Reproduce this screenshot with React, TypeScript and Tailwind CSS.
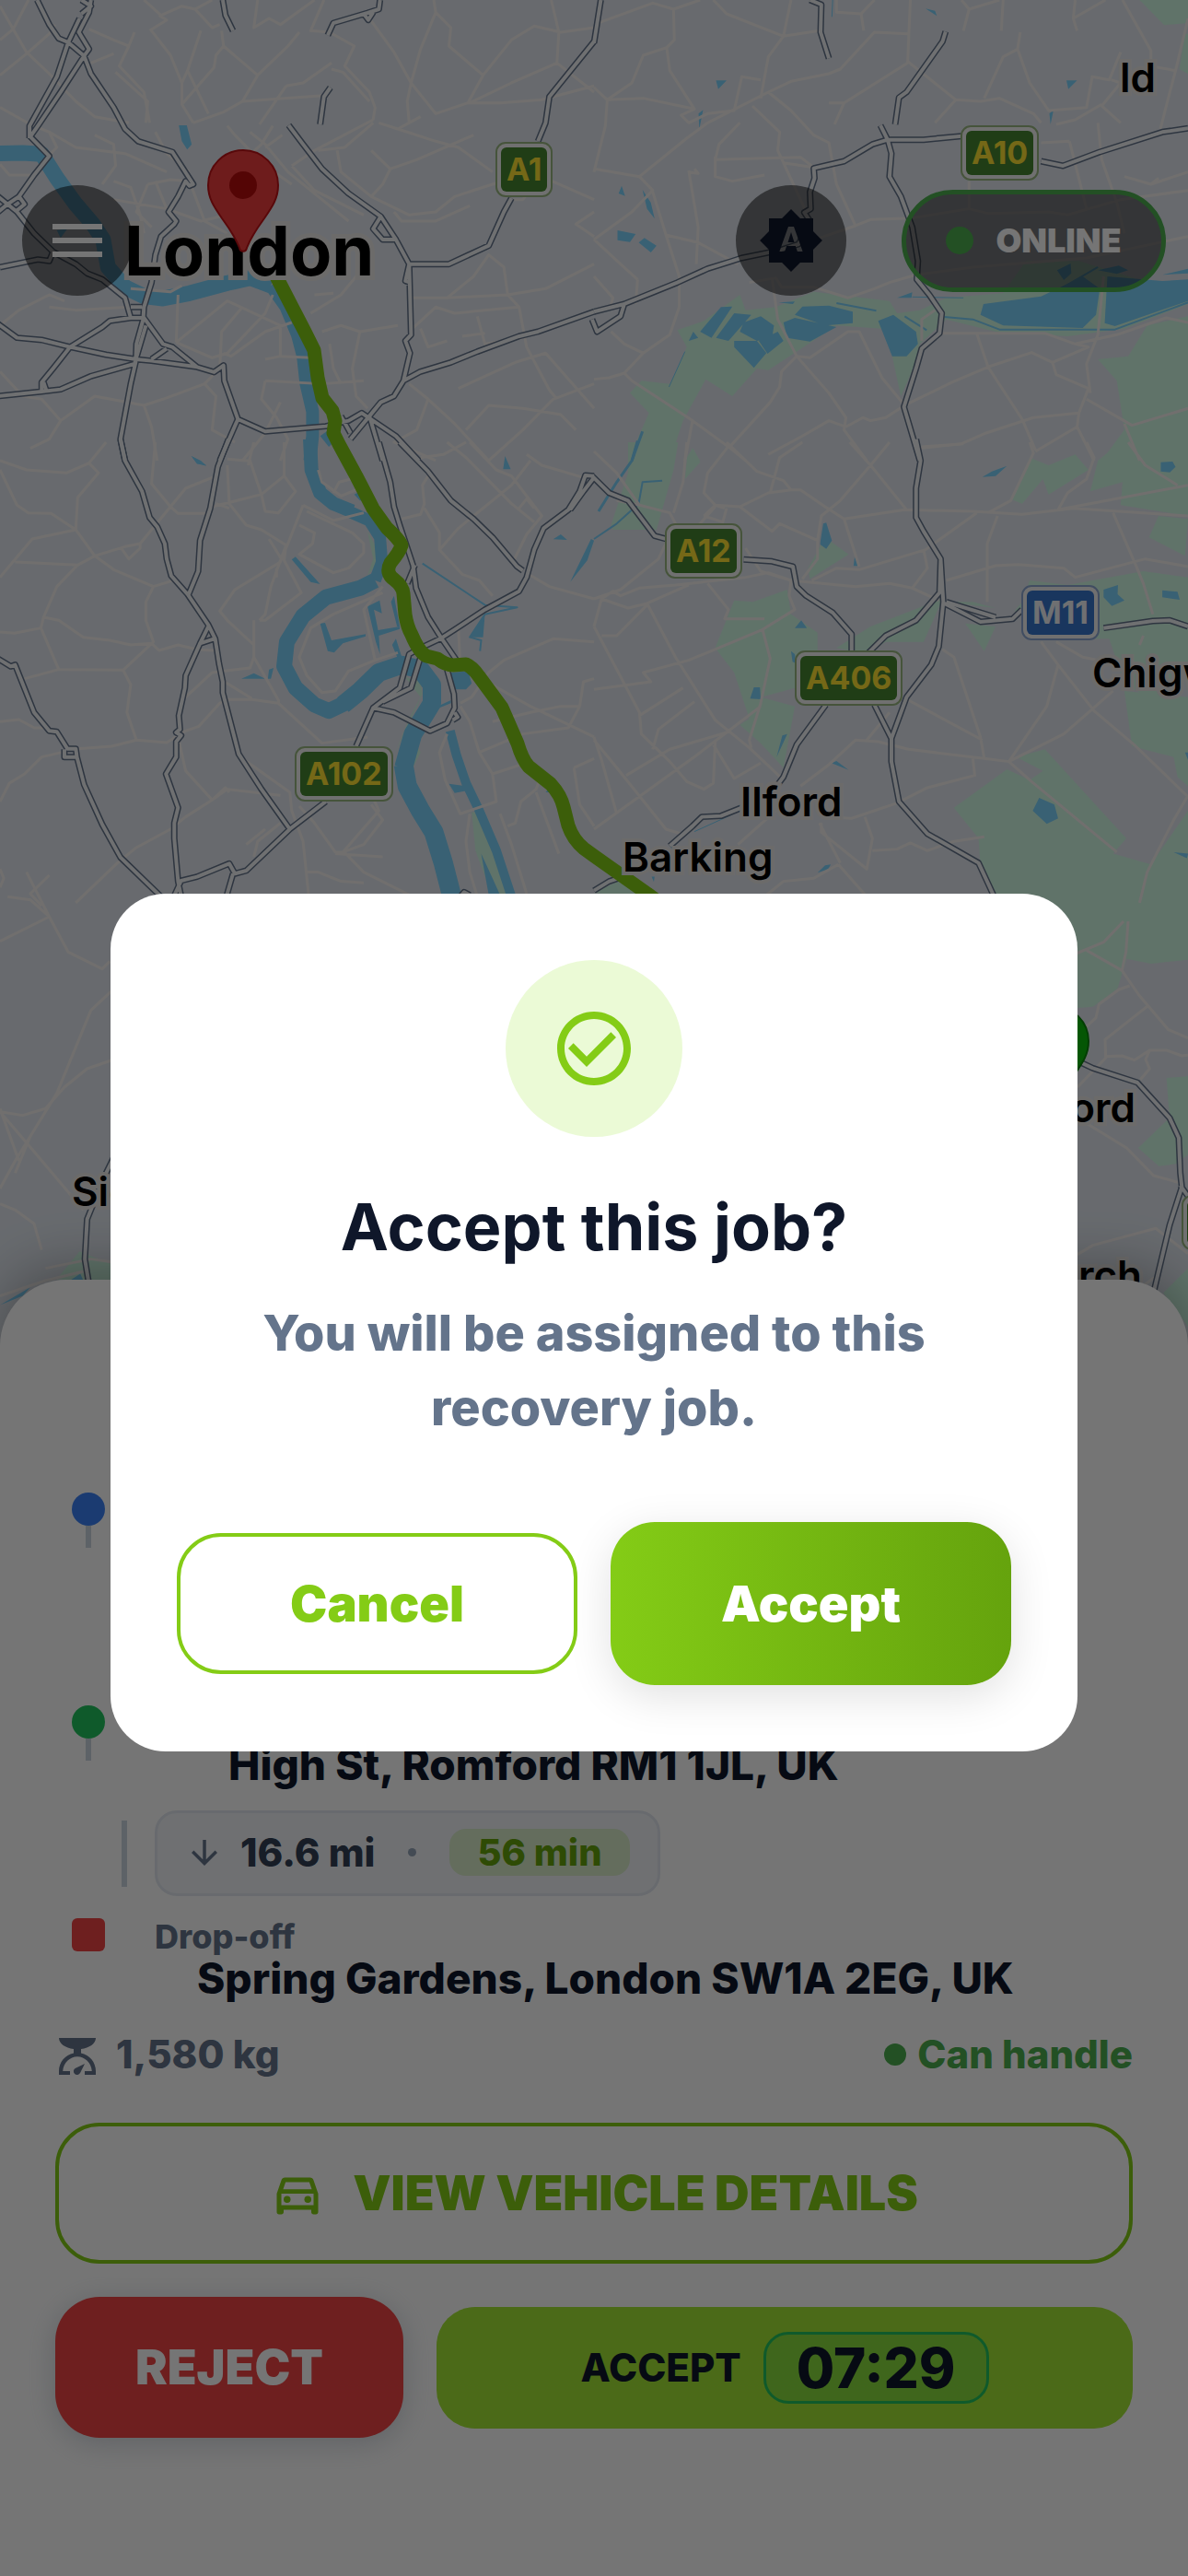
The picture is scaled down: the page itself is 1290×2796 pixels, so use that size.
import type { ReactNode } from "react";
import {
  MdArrowDownward,
  MdBrightnessAuto,
  MdCheckCircleOutline,
  MdMenu,
  MdOutlineDirectionsCar,
} from "react-icons/md";

type Tile = {
  at: string;
  green?: string[];
  water?: string[];
  river?: [string, number][];
  minor: string[];
  major: string[];
};

const tiles: Tile[] = [
  {
    at: "translate(0 0) scale(0.4114 0.3333)",
    water: ["M472 408L493 408L506 470L494 487L480 460Z", "M845 1420L868 1400L890 1430L868 1455Z", "M505 1485L545 1515L520 1510Z", "M150 750L178 745L160 775Z"],
    river: [
      ["M-10 500L60 498L110 502L150 580L200 665L245 730L272 780L285 870L330 935L380 965L430 972L500 955L600 922L660 905L715 930", 17],
      ["M715 930L755 1000L785 1090L800 1160L808 1250L825 1340L825 1420L818 1500", 14],
    ],
    minor: [
      "M0 130L35 95L75 0", "M0 20L70 170L130 240L200 330L250 380L340 400", "M0 245L75 170L130 110L145 80", "M0 350L80 405L130 430L200 480L330 500L440 560",
      "M235 95L300 130L340 150L315 215L380 300L395 400", "M240 205L300 175", "M305 235L390 330L385 400", "M355 105L340 150", "M380 0L425 50L480 20L515 30L560 90L580 80", "M515 30L560 0",
      "M680 0L670 90L710 60L740 80L830 0", "M395 100L440 65L420 50", "M400 100L450 180L480 270L480 340L510 400", "M530 100L495 230L480 270M495 230L550 370", "M585 100L590 150L680 245L640 330L590 365L510 400",
      "M590 150L570 180L565 220L480 340", "M680 245L760 150L790 105", "M640 330L870 310M755 280L800 270L875 205M755 280L685 405", "M855 0L820 100L870 105L935 150L910 215L975 300L990 350L985 390",
      "M875 225L905 235L975 330", "M975 60L1040 170L1085 270L1075 330L1080 400M1145 0L1150 40L1190 90L1185 150L1275 245L1235 335L1150 370L1085 270", "M1150 40L1110 160L1085 270", "M1235 335L1320 335L1430 325L1568 280M1275 245L1350 130L1410 85L1480 105L1568 90M1455 0L1475 105L1470 205L1568 300M1470 205L1350 270L1240 335",
      "M1000 400L1050 420L1150 460L1210 480L1300 560M1050 420L1110 380M985 390L830 490L770 540M840 490L910 480L985 400M600 410L620 440L700 540L770 600M660 430L700 470L760 560L840 640L920 720M770 540L830 620L960 700M745 440L700 480M720 410L690 470L620 550",
      "M1030 550L1100 520L1250 440M1030 550L1010 600L980 640L1080 700L1150 690L1200 640L1300 600L1400 560M980 490L1030 550M980 640L900 560L890 490M1040 690L1060 720L1150 720L1240 670M1420 570L1568 650M1568 690L1520 730L1568 770M1340 650L1380 650L1420 590",
      "M250 440L300 470L305 540L270 600M410 430L440 500L500 560M130 430L150 480L110 530M0 535L25 570L80 570M300 590L345 610L370 700L380 760M390 600L450 585L500 590M390 600L360 690L400 740M410 590L440 680M300 650L440 680L530 720L600 700M500 590L540 720L600 760",
      "M345 940L450 950L480 930M130 1000L200 1010L340 1000M0 1060L50 1010L130 960L170 980M470 960L465 1115M465 1115L600 980L740 1060L740 1160M465 1115L560 1165L600 1150L700 1020L720 960M580 1200L585 1080L640 1000M590 1150L610 1160L700 1080L770 1050M700 1170L740 1160L820 1165M700 1240L850 1250L960 1240M700 1240L690 1300L730 1360L760 1430L740 1500",
      "M830 960L880 955M820 1020L900 960L960 870M850 1080L900 1060L950 1080L1050 1060M870 1120L880 1200L900 1250M950 1080L930 1200L940 1290L970 1330M1080 970L1180 970L1250 900L1290 830L1330 870L1340 960L1370 1000L1390 1130L1450 1270L1470 1300M1180 970L1340 960L1440 940L1520 890L1568 860M1260 1030L1280 1120L1380 1100M1080 1080L1150 1000L1200 1020L1370 1000M1110 1070L1130 1130L1180 1110M1220 1095L1280 1085",
      "M1080 1250L1130 1300L1200 1380L1290 1500M1130 1300L1100 1400L1040 1440L1150 1500M1210 1265L1360 1180L1440 1150L1568 1330M1230 1400L1290 1320L1380 1330L1480 1350L1520 1400M1290 1500L1380 1400L1460 1300L1568 1250",
      "M0 1210L60 1290L110 1300L160 1370L250 1290L380 1320L430 1300L540 1250L580 1200M160 1370L130 1430L80 1460M380 1320L400 1390L415 1500M540 1250L570 1290L560 1400L620 1440M640 1500L700 1410L740 1310",
    ],
    major: [
      "M98 0L130 80L155 125L180 138L222 182L240 240L300 350L330 420L365 460L455 495L510 600L500 605L490 590L470 640L445 690L465 720L460 730L425 770L410 830L400 920L380 1000L378 1040L360 1120L358 1180L345 1250L330 1350L318 1430L330 1500",
      "M240 0L235 40L208 105L235 160L222 182L160 300L100 410L80 445L130 508L90 570L50 640L20 665L-5 690", "M215 0L240 20L215 45M210 60L180 138L150 250L78 410L78 450",
      "M-5 640L45 690L90 760L140 820L130 850L100 845L0 870", "M50 640L65 665L40 690", "M140 820L200 860L230 890L270 910L330 970L345 1035L290 1045L270 1065L185 1130L140 1200L110 1245L110 1270",
      "M345 1000L375 1000M345 1035L380 1035L430 1120L455 1130L520 1195L565 1212L590 1190L592 1240L628 1365L580 1500", "M-5 1055L45 1100L110 1107L185 1130L280 1155L360 1170L400 1175L520 1195M400 1170L440 1135",
      "M-5 1290L110 1275L160 1268L240 1225L355 1185L385 1060M110 1275L122 1270L115 1245",
      "M588 0L595 50L615 100", "M1003 0L1000 30L970 42L880 75L865 115M960 45L972 65L985 40", "M872 285L855 315L845 405", "M762 408L800 470L850 550L920 630L1005 705L1045 780L1010 780L985 745L1005 705",
      "M1045 780L1080 860L1085 1090L1070 1110L1082 1150L1065 1240L1040 1290L1005 1310L975 1355L925 1430M1080 860L1070 915L1082 920M1080 860L1185 860L1290 800L1330 690L1350 645M1420 460L1440 400L1450 315L1568 135",
      "M1065 1240L1110 1210L1190 1180L1260 1145L1370 1095L1420 1080L1568 1015", "M628 1365L700 1405L860 1388L920 1370L955 1345L1045 1420L1105 1500M975 1355L1010 1500M900 1355L925 1410",
    ],
  },
  {
    at: "translate(645 0) scale(0.4114 0.3333)",
    green: [
      "M1440 0L1568 0L1568 75L1505 82Z", "M1560 110L1568 110L1568 240L1545 225Z",
      "M220 1075L290 1045L385 960L400 1010L480 1000L580 950L780 980L800 1020L860 1010L930 970L1080 955L1140 850L1280 850L1568 960L1568 990L1400 1070L1250 1095L1060 1080L930 1040L860 1120L850 1180L810 1290L780 1120L760 1070L640 1060L460 1205L430 1200L365 1290L295 1235L235 1370L200 1500L90 1500L145 1345L95 1280L125 1240L200 1250L245 1130Z",
      "M1568 1030L1460 1060L1410 1160L1330 1170L1380 1240L1400 1400L1340 1500L1568 1500Z", "M260 1460L280 1500L240 1500Z",
    ],
    water: [
      "M335 1000L365 998L310 1100L280 1080Z", "M370 1020L415 1025L355 1110L322 1100Z", "M395 1050L440 1030L475 1060L470 1100L430 1110L385 1080Z", "M370 1110L430 1110L455 1150L422 1198L370 1130Z", "M500 1050L530 1035L640 1065L570 1112L510 1100Z", "M435 1110L485 1080L500 1110L458 1152Z",
      "M530 1025L550 998L620 995L683 1015L683 1052L610 1060Z", "M262 1080L275 1100L250 1110Z", "M750 1045L790 1025L850 1080L855 1120L825 1160L787 1160Z", "M1028 990L1180 965L1290 900L1335 940L1325 1025L1290 1068L1080 1060L1020 1025Z",
      "M1355 900L1500 915L1568 910L1568 980L1375 1062L1348 1052Z", "M1222 880L1258 858L1260 890L1240 912Z", "M1500 895L1568 875L1568 890Z", "M1330 880L1385 865L1410 880L1380 892Z", "M322 262L350 262L328 290Z", "M1247 262L1275 262L1252 290Z", "M875 28L900 35L905 52Z",
      "M62 750L110 762L95 788L62 782Z", "M118 790L133 775L165 800L150 822Z", "M65 630L73 605L82 638Z", "M128 618L150 660L160 712L140 680Z", "M800 970L840 952L838 970Z", "M487 985L530 982L525 990Z", "M276 370L288 358L278 420Z", "M1202 370L1213 358L1205 405Z",
    ],
    river: [["M640 987L745 1012", 2], ["M925 1032L1000 1040L1070 1073L1375 1073L1568 985", 2], ["M820 1030L878 1075", 2], ["M840 967L975 970", 1], ["M240 1145L198 1260", 1], ["M128 1405L100 1500", 3], ["M1205 960L1330 870", 2], ["M630 0L628 55", 1]],
    minor: [
      "M0 80L155 10L210 30L280 0M210 30L212 130L192 155L200 230L265 355M192 155L130 180L100 270L35 325M0 285L35 325L130 320L265 355L230 375L250 400L300 370L370 360L390 250L440 260M0 560L30 410L35 325M315 0L350 45L500 118L595 100M520 0L500 118L460 185L440 320M300 400L460 300L520 265L620 240M460 300L520 360L580 440L620 465L640 600L690 735L560 790",
      "M418 345L490 430L485 490L500 530L580 545M320 520L330 470L385 400M450 515L545 512L580 545M0 550L120 575L245 450L300 400M320 520L450 515M320 510L320 575L365 590L450 570M250 555L275 740L270 860M120 575L155 620L100 690L0 780M155 625L190 765L275 790L380 860M190 765L225 900L225 1000M250 560L275 565L265 550M500 530L560 690",
      "M640 0L640 40L705 45L740 0M705 45L712 100M835 0L828 200L955 325L1020 330L1070 320L1160 370L1180 400M830 110L740 105L650 225L620 240M620 335L660 335L828 205M660 335L635 405M955 325L900 400M970 0L990 30L975 100M990 30L1070 0M1080 0L1075 100M1270 0L1265 60L1275 100M1265 60L1350 0M1125 105L1118 160L1080 185L1030 320M1118 160L1150 270L1200 360L1300 350L1315 250L1360 260L1390 170M1340 340L1270 390L1220 405M1340 345L1390 400M1340 345L1390 270L1365 260M1395 0L1470 165L1470 215L1535 230L1568 60M1535 230L1520 300L1495 420",
      "M0 1235L40 1230L80 1215L130 1150L200 1090L225 1000M80 1215L100 1240L260 1370L360 1460L400 1500M260 1370L240 1500M45 1080L80 1120L130 1150M0 900L50 970L45 990M115 910L70 860L0 780M115 910L110 990M470 905L485 1040L535 1160L620 1280L665 1360L660 1400L720 1500M535 1160L570 1165L670 1080L700 1080L760 1230L820 1320M535 1160L495 1210L490 1260L465 1310L355 1460M665 1390L710 1360L730 1370L770 1360L820 1320M665 1390L620 1370L550 1420L460 1480",
      "M410 920L480 905L495 935L580 935L670 970L740 940L780 920L850 895M850 895L1000 870L1300 840L1568 770M690 735L730 715L840 710L990 680L1040 695L1200 690L1250 700L1390 650L1568 620M990 590L990 680M1255 460L1300 680M1330 400L1340 520L1380 660L1400 760M1180 465L1255 460M1470 600L1568 560M1400 575L1470 600L1490 580",
      "M820 1320L945 1245L1040 1195L1155 1148L1210 1180L1305 1130L1270 1120L1190 1085L910 1085M1010 1085L1040 1195L1130 1365L1165 1465M1210 1180L1220 1220L1305 1265L1280 1345L1160 1360L1035 1410L970 1445L860 1460M1280 1345L1275 1390L1165 1470M1270 1120L1380 1090L1510 1035L1568 1050M1345 900L1330 1090L1300 1185L1310 1280M1300 1300L1420 1385L1568 1330M1275 1390L1320 1500M1400 1380L1440 1500M865 1110L865 1040L900 1010",
    ],
    major: [
      "M18 0L0 140", "M570 0L600 15L598 105L620 190", "M928 103L920 135L825 300L805 318L795 405", "M756 408L775 455L870 455L970 443", "M775 455L735 470L660 525L580 548L582 580L570 625L572 680L555 692L570 720L540 795L490 815L390 840L360 852L300 875L220 920L80 990L0 1015", "M80 990L70 1030L8 1080L-5 1040",
      "M775 455L785 500L780 575L810 640L840 740L855 850L852 910L885 960L918 1020L912 1085L865 1135L850 1200L818 1325L860 1500", "M1180 525L1238 540L1335 495L1500 430L1568 418",
    ],
  },
  {
    at: "translate(0 480) scale(0.4114 0.3333)",
    green: ["M1070 765L1110 780L1115 820L1085 900L1040 1020L1080 900L1110 830Z", "M970 290L992 340L992 400L970 435L985 380Z", "M1098 980L1110 1010L1090 1060Z", "M1245 1205L1275 1200L1340 1480L1300 1480L1255 1330Z"],
    water: [
      "M770 382L780 373L845 462L820 455Z", "M845 590L858 588L875 645L965 625L965 632L905 655L882 685L865 680Z", "M970 535L1002 515L1008 557L987 545L998 612L1055 600L1055 608L1000 630L1003 690L992 650Z", "M1032 520L1040 500L1055 600L1048 600Z", "M1035 660L1045 640L1062 705L1050 705Z",
      "M637 770L670 752L700 770Z", "M707 770L710 740L722 735L715 770Z", "M1185 1112L1230 1120L1232 1135L1200 1142Z", "M1155 860L1190 840L1190 850L1160 865Z", "M1190 750L1240 745L1240 765L1245 785L1230 805L1195 805Z", "M935 170L950 160L970 190L950 190Z", "M1328 88L1333 45L1348 88Z", "M1460 316L1480 300L1497 318Z",
      "M1505 455L1560 315L1568 320L1550 385Z", "M505 45L530 60L545 77L520 70Z", "M1270 1340L1300 1420L1320 1475L1290 1475Z", "M1440 1140L1455 1120L1460 1140Z", "M1240 635L1280 560L1275 635Z",
    ],
    river: [
      ["M818 -10L822 90L845 165L880 200L930 225", 15], ["M920 225L975 255L1003 310L1008 390L990 450", 13], ["M990 450L950 475L860 505L800 565L757 650L750 730L780 800L830 855L868 875L910 850", 17], ["M905 855L950 810L1000 750L1060 725L1110 740L1140 790L1140 850L1090 950L1065 1060", 20], ["M1065 1050L1075 1120L1110 1200L1145 1270L1170 1370L1195 1490", 21],
      ["M1188 940L1205 1020L1230 1110L1265 1200L1310 1330L1350 1480", 10], ["M1115 395L1280 530L1365 538L1280 560L1240 635L1270 645L1267 680", 2],
    ],
    minor: [
      "M0 60L70 90L175 100L235 68L280 0M235 68L260 100L205 180L200 285L85 315L0 440M0 90L45 205L75 230L135 232L200 285L250 370L300 415L405 470L470 445M40 390L205 400L250 370L330 340L370 330M320 345L340 380L370 345L370 330L450 210L400 135L410 0M450 210L490 150L560 115M450 210L470 232L550 232M205 400L150 470L115 570L155 580L220 635L290 645L345 660L400 655L420 678L470 660L520 675L565 678M115 570L108 605L155 740L325 742L405 650L385 580L385 520L405 470M0 618L38 622L108 605M65 770L155 740M325 742L345 790L335 880L360 970",
      "M0 910L50 903L90 930L130 930M205 998L295 990L360 970L440 978L490 940L525 925L580 850L600 838L665 838L735 850L735 840L670 700L670 580M205 998L110 1025L65 1080L25 1110L0 1170M470 960L490 1070L560 1165L600 1130L740 1150M560 1165L595 1125L605 1140M560 1165L490 1220L450 1260L360 1320L310 1370L200 1500M490 830L525 790L560 750L660 735L670 700M580 770L665 835M640 1030L765 1140L770 1200L800 1300L815 1480",
      "M600 75L605 200L650 270L690 285L755 335L750 385L795 490L700 580L685 580M560 210L690 170L750 110L750 0M570 200L605 215M650 60L660 60L690 170L700 225L735 230L780 160L750 110M650 60L600 55M655 75L670 0M800 205L760 330L740 390L620 480L580 550L600 580L670 660M710 315L745 385M790 270L830 295L825 330L790 365L880 425L920 410L960 360L960 330L930 295L810 225M755 335L715 470L700 560L685 580M800 205L880 255L960 230M730 410L730 440",
      "M735 850L850 980L970 960M1010 490L880 560L820 605L790 700L810 760L850 815L885 810L920 745L990 710L1050 685M1010 470L960 545L990 710M840 90L850 130L900 175L950 150M880 165L895 130L960 110M790 1185L830 1240L885 1335L905 1335L1000 1200L930 1010M905 1335L960 1310L1010 1230L980 1180M885 1340L1010 1350M905 1330L960 1400L1090 1480",
      "M1110 50L1170 40L1230 0M1060 250L1110 235L1120 200L1115 140L1135 100M1120 215L1160 295L1160 350L1220 430L1265 450L1300 500M1160 350L1210 280L1350 140L1400 60M1180 0L1230 50L1350 200L1410 260M1240 0L1310 90L1350 110L1430 240L1390 300L1350 400M1370 215L1390 185L1410 215M1390 40L1430 75L1540 115M1395 430L1450 470L1568 510",
      "M1210 610L1215 730M1215 860L1240 910L1265 1010L1300 1080L1310 1170L1215 1210L1175 1100L1160 1010L1180 950M1215 850L1245 830L1290 750L1330 710L1460 640L1568 650M1270 770L1400 860L1568 960M1400 880L1480 860L1530 860L1540 780L1568 770M1300 910L1400 880M1265 1010L1380 950L1500 930L1530 860M1340 1250L1360 1240L1375 1170L1415 1130L1430 1080M1415 1140L1475 1340M1300 1080L1400 1040M1320 1210L1350 1310L1390 1470M1240 1210L1230 1300L1240 1400L1260 1480M1515 1060L1568 1030M1515 1060L1530 1180L1568 1250",
      "M0 1390L10 1420L0 1450M130 1410L80 1470L110 1510M650 1310L700 1260M670 1350L680 1300L740 1240M810 1400L840 1400L900 1430L960 1435",
    ],
    major: [
      "M318 -10L330 60L375 160L395 245L415 275L435 330L440 380L452 435L495 495L550 595L568 640L578 720L588 780L588 815L630 1015L690 1130L765 1260L860 1170", "M603 -10L575 80L555 215L528 320L523 420L498 495", "M550 600L528 655L565 640M528 655L490 760L488 800L472 890L475 935L465 945L478 955L465 975L465 1025L438 1080L470 1190L460 1240L460 1290L470 1430L480 1490",
      "M-5 705L28 730L40 725L90 880L130 940L150 943L178 998L200 998L203 1025L170 1025L170 1000M203 1025L222 1115L270 1245L318 1352L425 1480", "M765 1260L650 1395L620 1405L605 1372L520 1415L478 1428L455 1490M615 1405L595 1490",
      "M1000 0L1030 130L1040 210L1055 270L1090 400L1098 475L1130 570L1165 638L1205 710M1055 0L1130 95L1190 190L1250 250L1300 310L1365 405L1380 418", "M1568 110L1545 108L1530 160L1500 220L1435 280L1410 350L1390 440L1370 485L1280 545L1200 610L1165 638L1110 670L1080 690L1055 800L985 865L940 990", "M1110 700L1085 800L1010 845M985 865L1040 880L1135 940L1180 915L1200 865L1198 820L1180 740M1200 880L1208 895L1195 905M1095 400L1075 460M1568 115L1540 160L1505 220",
      "M1215 1480L1225 1465L1240 1475",
    ],
  },
  {
    at: "translate(645 480) scale(0.4114 0.3333)",
    green: [
      "M90 0L222 0L210 90L165 285L50 285L45 270L90 100Z", "M245 60L262 20L280 65L240 120Z", "M610 310L672 365L570 445L565 410Z", "M370 515L420 520L510 480L520 560L590 620L590 680L530 800L440 830L530 860L500 1060L440 980L385 920L410 900L370 750L320 670Z",
      "M640 670L730 600L920 510L870 650L770 650L720 690Z", "M1150 50L1200 75L1270 40L1305 90L1200 170L1185 120L1130 200L1100 185Z", "M1330 60L1390 0L1568 0L1568 240L1390 205L1395 130L1310 160Z", "M1490 240L1568 250L1560 370L1465 310Z",
      "M1150 450L1250 465L1450 420L1568 440L1568 740L1540 830L1500 850L1400 790L1360 640L1280 640L1240 610L1110 550L1130 520Z", "M980 590L1060 600L1030 680Z", "M1060 540L925 520L1000 520Z", "M1400 810L1568 830L1568 1120L1540 1090L1530 1025L1420 990Z",
      "M950 1190L1090 1065L1150 1100L1185 1070L1115 1025L1190 1000L1405 1290L1370 1340L1470 1375L1568 1200L1568 1565L1070 1565L1020 1380L1015 1290Z", "M0 1468L70 1425L120 1480Z",
    ],
    water: [
      "M598 320L605 265L613 262L628 320L613 347L597 333Z", "M685 403L688 372L698 403Z", "M530 605L547 580L562 605Z", "M412 835L422 798L438 798L440 837Z", "M482 1025L497 955L510 950Z", "M627 1045L640 1038L672 1067Z", "M590 1402L610 1378L625 1375L618 1390Z", "M1158 1200L1175 1158L1215 1180L1225 1225L1195 1243Z",
      "M1345 480L1383 465L1382 495L1400 515L1367 533L1345 505Z", "M1500 482L1540 487L1546 513L1500 505Z", "M1496 65L1527 63L1535 80L1520 98L1496 95Z", "M1025 113L1050 95L1090 77L1060 110Z", "M1530 1335L1568 1340L1565 1355Z", "M520 680L530 690L533 720L524 715Z", "M1560 1010L1568 1010L1568 1035Z", "M152 1415L160 1415L158 1432Z",
    ],
    river: [["M115 -5L100 60L60 130L12 225", 3], ["M180 125L128 130L118 200L60 265L0 315", 2], ["M365 1212L265 1268", 1]],
    minor: [
      "M0 30L60 100L120 205L200 230L215 265M120 205L60 190M245 0L235 130L210 230M350 0L430 95L500 125L520 155L545 155L610 210L660 250L820 220L1000 225L1130 235L1265 215L1568 240M360 5L300 100L290 165L320 205L385 210L460 165L520 155M290 240L320 205L345 215M385 210L470 290L490 265L590 320L600 240L650 190L730 75L780 0M550 0L490 50L465 165M675 0L730 75L825 220M320 210L240 320M290 240L340 260L350 215M660 250L700 405M865 15L975 5",
      "M400 345L440 420L520 450L690 470L780 460L840 475L910 515M575 450L640 410L700 415L875 350L1010 230M870 350L880 410L840 475M590 320L590 380L550 445M930 450L1060 402L1120 398L1240 410L1270 440L1455 380L1568 405M1065 240L1038 330L1038 520M1040 230L1100 190L1160 35L1150 0M1225 220L1250 165L1300 120L1320 50L1300 0M1225 220L1568 140M1410 0L1455 75L1540 140M1370 230L1430 400L1450 460L1475 560M1440 660L1450 630",
      "M215 265L170 380L70 480L0 510M0 600L20 510L50 485L70 500L120 475L215 465L400 440L460 425L520 450L515 500L530 545L445 610L250 710L130 750L150 780L0 805M20 510L90 540L140 525L250 465M140 525L215 700L320 905L410 995L500 1100M20 630L60 630L140 530M0 600L120 880L125 950L200 1040L245 1105L290 1130L315 1110L320 975M300 460L355 545L345 575L450 575M445 610L465 705L440 850L410 970L415 995M60 1210L20 1035L0 960M120 890L235 800M265 845L170 935L155 1000M350 945L270 1020L0 1260M315 985L370 1095L440 1045M0 970L60 1060L190 1260L230 1275M85 1085L200 1000L350 945L440 860",
      "M545 1120L620 1050L690 970L750 975L830 1000L1030 1030L1095 1040L1240 950L1370 810M920 675L950 700L1020 960L1030 1030M830 840L1025 970M1180 650L1225 725L1320 875L1430 990L1568 1155M1225 725L1195 860L1095 1040L1155 1105L1380 1335M1220 650L1290 700L1370 720M720 970L780 880M1000 1030L1005 1085L880 1125L800 1175L680 1225L600 1220M600 1240L600 1270L720 1390L735 1290L715 1220M735 1330L800 1325L835 1305L880 1330L950 1300L1030 1285M645 1375L580 1420L500 1430L450 1480M645 1375L720 1480M380 1310L480 1200M1568 1150L1530 1230L1460 1400L1440 1500M595 1240L650 1370",
    ],
    major: [
      "M-5 110L40 165L90 190L160 305L190 315", "M395 382L470 388L525 405L535 470L560 500L630 555L680 625L680 680", "M850 -10L862 60L850 150L850 245L870 290L915 380L922 520L910 665L890 725L825 830L785 965L785 1040L805 1170L880 1275L1015 1370L1060 1490", "M915 380L912 490L850 580L770 630L725 685", "M925 525L1020 585L1105 575L1130 545M930 520L1060 570", "M1345 605L1475 582L1520 580L1568 600", "M612 855L535 985L500 1090L485 1115", "M740 855L785 965", "M390 1190L335 1217L285 1220L260 1250L200 1315M100 1405L40 1430L0 1460",
    ],
  },
  {
    at: "translate(1090 1000) scale(0.3333 0.3333)",
    green: ["M200 -10L600 -10L600 125L480 138L400 122L370 220L290 278L200 285Z", "M530 510L600 505L600 760L560 790L505 797L438 738L540 640Z", "M600 1130L520 1210L600 1320Z"],
    minor: [
      "M200 120L325 68L390 0M405 0L398 100L385 160L440 240L535 352L600 380M270 95L385 160M410 210L375 222L310 270L300 315L250 360M470 275L330 385L332 445L240 540M332 440L385 438L425 452L475 420L530 420L580 438L600 436M475 420L462 450L475 480L445 515M240 640L400 738L488 828L575 852M240 1085L290 1055L495 1000L600 1082M490 1160L450 1190",
    ],
    major: ["M230 450L290 478L435 525L540 640L570 705L575 820L580 865L540 990L490 1200", "M575 860L600 895"],
  },
  {
    at: "translate(0 940) scale(0.8227 0.3333)",
    green: ["M75 1345L105 1255L150 1300L150 1360Z"],
    water: ["M92 1350L106 1328L110 1350Z", "M0 1430L40 1372L30 1400Z"],
    minor: [
      "M0 245L65 165L90 280L135 335L145 310M10 100L40 110L65 165L35 20M150 400L120 470L75 740L20 960L0 1050M0 800L30 812L60 790L85 720L115 660L150 630M0 800L45 930L110 1120M0 790L25 960M40 880L20 1000M0 1100L20 1120L45 1165L55 1250M60 1310L120 1280L150 1290M0 1400L60 1350L110 1320",
    ],
    major: ["M150 950L138 1010L115 1150L112 1280L118 1370"],
  },
];

const route =
  "M300 300L317 333L331 360L341 380L345 410L350 432L361 446L364 457L362 470L368 482L387 517L405 552L420 573Q434 586 436 592Q434 599 424 611Q418 622 428 629Q437 636 438 644L440 667Q442 680 447 689Q455 708 463 712L475 715Q484 722 492 722L506 721Q513 724 520 734L545 768L562 807Q567 824 574 832L598 851Q609 863 612 876L617 896Q622 911 634 921L645 929L703 970L730 990";

function Layer({ pick }: { pick: (tile: Tile) => ReactNode }) {
  return (
    <>
      {tiles.map((tile) => (
        <g key={tile.at} transform={tile.at}>
          {pick(tile)}
        </g>
      ))}
    </>
  );
}

function Lines({ d, color, width }: { d: string[]; color: string; width: number }) {
  return (
    <path
      d={d.join("")}
      fill="none"
      stroke={color}
      strokeWidth={width}
      strokeLinejoin="round"
      vectorEffect="non-scaling-stroke"
    />
  );
}

function Pin({ fill, edge, dot }: { fill: string; edge: string; dot: string }) {
  return (
    <svg viewBox="0 0 78 112" className="h-[112px] w-[78px]" aria-hidden="true">
      <path
        d="M39 1C18 1 1 18 1 39c0 14 6 23 15 36 8 11 14 19 19 32 1 5 7 5 8 0 5-13 11-21 19-32 9-13 15-22 15-36C77 18 60 1 39 1Z"
        fill={fill}
        stroke={edge}
        strokeWidth="2"
      />
      <circle cx="39" cy="39" r="15" fill={dot} />
    </svg>
  );
}

const shields = [
  { name: "A1", place: "left-[538px] top-[154px]" },
  { name: "A10", place: "left-[1043px] top-[136px]" },
  { name: "A12", place: "left-[722px] top-[568px]" },
  { name: "A406", place: "left-[863px] top-[706px]" },
  { name: "A102", place: "left-[320px] top-[810px]" },
  { name: "A127", place: "left-[1283px] top-[1297px]" },
];

const towns = [
  { name: "ld", place: "left-[1216px] top-[54px]" },
  { name: "Chigwell", place: "left-[1186px] top-[700px]" },
  { name: "Ilford", place: "left-[804px] top-[840px]" },
  { name: "Barking", place: "left-[676px] top-[900px]" },
  { name: "Romford", place: "right-[57px] top-[1172px]" },
  { name: "Sidcup", place: "left-[78px] top-[1263px]" },
  { name: "Hornchurch", place: "right-[50px] top-[1354px]" },
];

function CityMap() {
  return (
    <div className="absolute inset-x-0 top-0 h-[1470px] overflow-hidden bg-[#e2e8f0]">
      <svg viewBox="0 0 1290 1470" preserveAspectRatio="xMidYMin slice" className="h-full w-full" aria-hidden="true">
        <Layer pick={(t) => <path d={(t.green ?? []).join("")} fill="#d1fae5" />} />
        <Layer
          pick={(t) => (
            <>
              <path d={(t.water ?? []).join("")} fill="#7dd3fc" />
              {(t.river ?? []).map(([d, width]) => (
                <Lines key={d} d={[d]} color="#7dd3fc" width={width} />
              ))}
            </>
          )}
        />
        <Layer pick={(t) => <Lines d={t.minor} color="#f6f2f0" width={3} />} />
        <Layer pick={(t) => <Lines d={t.major} color="#64748b" width={7} />} />
        <Layer pick={(t) => <Lines d={t.major} color="#f1f3f7" width={4} />} />
        <path d={route} fill="none" stroke="#84cc16" strokeWidth="15" strokeLinejoin="round" />
      </svg>
      {shields.map(({ name, place }) => (
        <div key={name} className={`absolute rounded-[11px] border-2 border-[#9ab882] bg-[#f4f4f4] p-[4px] ${place}`}>
          <div className="rounded-md bg-[#468630] px-[6px] text-[34px] leading-[48px] font-bold text-[#fee234]">{name}</div>
        </div>
      ))}
      <div className="absolute top-[635px] left-[1109px] rounded-[11px] border-2 border-[#8fa9d4] bg-[#f4f4f4] p-[4px]">
        <div className="rounded-md bg-[#3876cd] px-[6px] text-[34px] leading-[48px] font-bold text-[#f1f5f9]">M11</div>
      </div>
      <div className="absolute top-[1091px] left-[1105px]">
        <Pin fill="#0dbb09" edge="#098709" dot="#065f06" />
      </div>
      {towns.map(({ name, place }) => (
        <div
          key={name}
          className={`absolute text-[44px] leading-[60px] font-semibold text-black [paint-order:stroke_fill] [-webkit-text-stroke:8px_#eceae8] ${place}`}
        >
          {name}
        </div>
      ))}
      <div className="absolute top-[222px] left-[135px] text-[74px] leading-[100px] font-bold text-black [paint-order:stroke_fill] [-webkit-text-stroke:10px_#eceae8]">
        London
      </div>
      <div className="absolute top-[162px] left-[225px]">
        <Pin fill="#ef3d3d" edge="#c01216" dot="#b70d0d" />
      </div>
    </div>
  );
}

function ScaleIcon() {
  return (
    <svg viewBox="0 0 24 24" className="size-[48px]" fill="currentColor" aria-hidden="true">
      <path d="M2 2h20c0 3-3.500 5.500-8 6v2.200c4.600.9 8 4.900 8 9.800v2h-6v-2h3.900c-.3-4.500-3.800-7.900-7.900-7.900S4.400 15.500 4.100 20H8v2H2v-2c0-4.900 3.400-8.900 8-9.800V8C5.500 7.500 2 5 2 2Z" />
      <path d="M16 16l-2.500 5a1.900 1.900 0 1 1-2.700-2.500Z" />
    </svg>
  );
}

export default function App() {
  return (
    <div className="relative flex min-h-screen flex-col overflow-hidden font-['Inter',sans-serif] font-extrabold text-[#0f172a]">
      <CityMap />

      <header className="relative flex items-center px-6 pt-[201px]">
        <button
          type="button"
          aria-label="Menu"
          className="mr-auto flex size-[120px] items-center justify-center rounded-full bg-black/50 text-white"
        >
          <MdMenu className="size-[72px]" />
        </button>
        <button
          type="button"
          aria-label="Automatic brightness"
          className="mr-[60px] flex size-[120px] items-center justify-center rounded-full bg-black/50"
        >
          <MdBrightnessAuto className="size-[72px]" />
        </button>
        <button
          type="button"
          className="flex h-[111px] min-w-[287px] items-center justify-center gap-[24px] rounded-full border-[5px] border-[#4caf50] bg-black/50 text-[36px] font-black text-white"
        >
          <span className="size-[30px] rounded-full bg-[#4caf50]" />
          ONLINE
        </button>
      </header>

      <main className="relative mt-auto rounded-t-[72px] bg-white px-[60px] pt-[231px] pb-[150px] shadow-[0_-12px_60px_rgba(0,0,0,0.3)]">
        <ul>
          <li className="flex h-[231px] w-[72px] flex-col items-end pr-[18px]">
            <span className="flex flex-col items-center">
              <span className="size-[36px] rounded-full bg-[#3b82f6]" />
              <span className="h-[24px] w-[6px] bg-[#cbd5e1]" />
            </span>
          </li>
          <li className="flex h-[114px] gap-[54px] pl-[18px]">
            <span className="flex flex-col items-center">
              <span className="size-[36px] rounded-full bg-[#22c55e]" />
              <span className="h-[24px] w-[6px] bg-[#cbd5e1]" />
            </span>
            <p className="pt-[37px] pl-[80px] text-[46px] leading-[54px] whitespace-nowrap">High St, Romford RM1 1JL, UK</p>
          </li>
          <li className="flex items-center gap-[30px] pl-[72px]">
            <span className="h-[72px] w-[6px] bg-[#cbd5e1]" />
            <div className="flex h-[93px] items-center rounded-[24px] border-[3px] border-[#e2e8f0] bg-[#f1f5f9] px-[30px] pb-[2px]">
              <MdArrowDownward className="size-[42px] text-[#64748b]" />
              <span className="ml-[18px] text-[42px] text-[#334155]">16.6 mi</span>
              <span className="mx-[36px] size-[9px] rounded-full bg-[#94a3b8]" />
              <span className="rounded-[18px] bg-[#84cc16]/20 px-[30px] text-[40px] leading-[51px] text-[#65a30d]">56 min</span>
            </div>
          </li>
          <li className="mt-[24px] flex gap-[54px] pl-[18px]">
            <span className="size-[36px] rounded-md bg-[#ef4444]" />
            <div>
              <p className="text-[36px] leading-[40px] text-[#64748b]">Drop-off</p>
              <p className="pl-[46px] text-[46px] leading-[50px] whitespace-nowrap">Spring Gardens, London SW1A 2EG, UK</p>
            </div>
          </li>
        </ul>

        <div className="mt-[36px] flex h-[48px] items-center text-[42px] leading-[44px] text-[#64748b]">
          <ScaleIcon />
          <span className="mb-[4px] ml-[18px]">1,580 kg</span>
          <span className="mb-[4px] ml-auto flex items-center gap-[12px] text-[#4caf50]">
            <span className="size-[24px] rounded-full bg-[#4caf50]" />
            Can handle
          </span>
        </div>

        <button
          type="button"
          className="mt-[48px] flex h-[153px] w-full items-center justify-center gap-[30px] rounded-[48px] border-[4px] border-[#84cc16] text-[52px] font-black text-[#84cc16]"
        >
          <MdOutlineDirectionsCar className="size-[60px]" />
          VIEW VEHICLE DETAILS
        </button>

        <div className="mt-[36px] flex items-center gap-[36px]">
          <button
            type="button"
            className="h-[153px] flex-1 rounded-[48px] bg-[#ef4444] text-[52px] font-black text-white shadow-[0_6px_30px_rgba(100,116,139,0.3)]"
          >
            REJECT
          </button>
          <button
            type="button"
            className="flex h-[132px] flex-2 items-center justify-center gap-[24px] rounded-[42px] bg-[#a3e635] text-[42px]"
          >
            ACCEPT
            <span className="rounded-[27px] border-[3px] border-[#22c55e] bg-[#22c55e]/20 px-[33px] text-[60px] leading-[72px]">
              07:29
            </span>
          </button>
        </div>
      </main>

      <div className="absolute inset-0 flex items-center justify-center bg-black/54 px-[120px] pt-[177px] pb-[102px]">
        <section
          role="dialog"
          aria-modal="true"
          aria-labelledby="accept-title"
          className="flex w-full flex-col items-center rounded-[60px] bg-white p-[72px] text-center"
        >
          <div className="flex size-[192px] items-center justify-center rounded-full bg-[#ebfad6]">
            <MdCheckCircleOutline className="size-[96px] text-[#84cc16]" />
          </div>
          <h1 id="accept-title" className="mt-[48px] text-[70px] leading-[100px] font-bold">
            Accept this job?
          </h1>
          <p className="mt-[24px] px-[36px] text-[54px] leading-[81px] text-[#64748b]">
            You will be assigned to this recovery job.
          </p>
          <div className="mt-[84px] grid w-full grid-cols-2 items-center gap-[36px]">
            <button
              type="button"
              className="h-[153px] rounded-[48px] border-[4px] border-[#84cc16] text-[54px] font-black text-[#84cc16]"
            >
              Cancel
            </button>
            <button
              type="button"
              className="h-[177px] rounded-[48px] bg-linear-to-r from-[#84cc16] to-[#65a30d] text-[54px] font-black text-white shadow-[0_12px_48px_rgba(0,0,0,0.12)]"
            >
              Accept
            </button>
          </div>
        </section>
      </div>
    </div>
  );
}
